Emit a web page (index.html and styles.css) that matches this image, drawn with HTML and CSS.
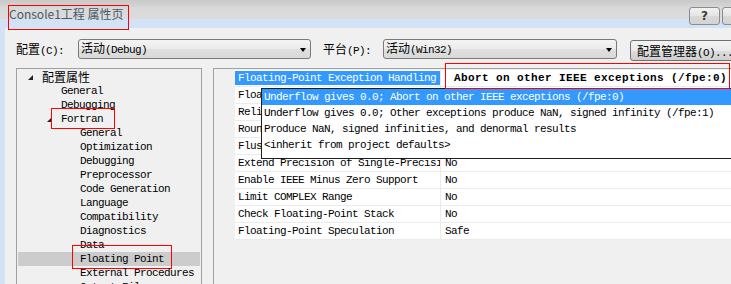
FILE: index.html
```html
<!DOCTYPE html>
<html>
<head>
<meta charset="utf-8">
<title>Console1工程 属性页</title>
<link rel="stylesheet" href="styles.css">
</head>
<body>
<div class="window">
  <div class="titlebar">
    <div class="title">Console1工程 属性页</div>
    <div class="tbtns"><div class="tbtn">?</div><div class="tbtn"></div></div>
    <span class="mark mark-title"></span>
  </div>
  <div class="main">
    <div class="edge"></div>
    <div class="dialog">
      <div class="toolbar ss">
        <div class="lbl lbl1"><span class="cj">配置</span>(C):</div>
        <div class="combo combo1"><span><span class="cj">活动</span>(Debug)</span><i class="arrow"></i></div>
        <div class="lbl lbl2"><span class="cj">平台</span>(P):</div>
        <div class="combo combo2"><span><span class="cj">活动</span>(Win32)</span><i class="arrow"></i></div>
        <div class="btn"><span class="cj">配置管理器</span>(O)...</div>
      </div>
      <div class="panes ss">
        <div class="tree">
          <div class="node l0"><i class="exp"><b class="tri"></b></i><span class="cj">配置属性</span></div>
          <div class="node l1"><i class="exp"></i>General</div>
          <div class="node l1"><i class="exp"></i>Debugging</div>
          <div class="node l1"><i class="exp"><b class="tri"></b></i>Fortran<span class="mark mark-fortran"></span></div>
          <div class="node l2"><i class="exp"></i>General</div>
          <div class="node l2"><i class="exp"></i>Optimization</div>
          <div class="node l2"><i class="exp"></i>Debugging</div>
          <div class="node l2"><i class="exp"></i>Preprocessor</div>
          <div class="node l2"><i class="exp"></i>Code Generation</div>
          <div class="node l2"><i class="exp"></i>Language</div>
          <div class="node l2"><i class="exp"></i>Compatibility</div>
          <div class="node l2"><i class="exp"></i>Diagnostics</div>
          <div class="node l2"><i class="exp"></i>Data</div>
          <div class="node l2 sel"><i class="exp"></i>Floating Point<span class="mark mark-fp"></span></div>
          <div class="node l2"><i class="exp"></i>External Procedures</div>
          <div class="node l2"><i class="exp"></i>Output Files</div>
        </div>
        <div class="grid">
          <div class="rows">
            <div class="row"><div class="name hl">Floating-Point Exception Handling</div><div class="val edit">Abort on other IEEE exceptions (/fpe:0)</div></div>
            <div class="row"><div class="name">Floating Point Model</div><div class="val">Precise (/fp:precise)</div></div>
            <div class="row"><div class="name">Reliable Floating Point Exceptions Model</div><div class="val">Disable</div></div>
            <div class="row"><div class="name">Round Floating Point Results</div><div class="val">Default</div></div>
            <div class="row"><div class="name">Flush Denormal Results to Zero</div><div class="val">No</div></div>
            <div class="row"><div class="name">Extend Precision of Single-Precision Constants</div><div class="val">No</div></div>
            <div class="row"><div class="name">Enable IEEE Minus Zero Support</div><div class="val">No</div></div>
            <div class="row"><div class="name">Limit COMPLEX Range</div><div class="val">No</div></div>
            <div class="row"><div class="name">Check Floating-Point Stack</div><div class="val">No</div></div>
            <div class="row"><div class="name">Floating-Point Speculation</div><div class="val">Safe</div></div>
          </div>
          <div class="popup">
            <div class="opt hl">Underflow gives 0.0; Abort on other IEEE exceptions (/fpe:0)</div>
            <div class="opt">Underflow gives 0.0; Other exceptions produce NaN, signed infinity (/fpe:1)</div>
            <div class="opt">Produce NaN, signed infinities, and denormal results</div>
            <div class="opt">&lt;inherit from project defaults&gt;</div>
          </div>
          <span class="mark mark-val"></span>
        </div>
      </div>
    </div>
  </div>
</div>
</body>
</html>
```

FILE: styles.css
```css
* { box-sizing: border-box; }
html, body {
  margin: 0;
  padding: 0;
  width: 731px;
  height: 284px;
  overflow: hidden;
  background: #d4e2f8;
}
.ss {
  font-family: "Liberation Mono", "Noto Sans CJK SC", monospace;
  font-size: 11px;
  letter-spacing: -0.6px;
  color: #000;
}
.cj {
  font-family: "Noto Sans CJK SC", sans-serif;
  font-size: 12px;
  letter-spacing: 0;
}
.window {
  display: flex;
  flex-direction: column;
  width: 731px;
}
.titlebar {
  position: relative;
  height: 28px;
  flex-shrink: 0;
  display: flex;
  align-items: flex-start;
  background: linear-gradient(#c9c9c9 0, #d1d1d1 5px, #d9d9d9 8px, #dbdbdb 19px, #d4e2f8 19px, #d4e2f8 28px);
}
.title {
  font-family: "Noto Sans CJK SC", sans-serif;
  font-size: 12px;
  color: #4a5868;
  padding-left: 9px;
  margin-top: 5px;
  line-height: 17px;
  white-space: nowrap;
}
.tbtns {
  display: flex;
  gap: 2px;
  margin-left: auto;
  margin-right: -22px;
  margin-top: 7px;
}
.tbtn {
  width: 31px;
  height: 18px;
  border: 1px solid #8c8c8c;
  border-radius: 3px;
  background: linear-gradient(#f2f2f2, #e4e4e4 50%, #d8d8d8 51%, #d4d4d4);
  font: bold 12px "DejaVu Sans", sans-serif;
  text-align: center;
  line-height: 16px;
  color: #3a3a3a;
}
.main {
  display: flex;
  height: 256px;
  flex-shrink: 0;
}
.edge {
  width: 5px;
  flex-shrink: 0;
  background: #d4e2f8;
}
.dialog {
  flex: 1;
  min-width: 0;
  background: #f0f0f0;
  display: flex;
  flex-direction: column;
  overflow: hidden;
}
.toolbar {
  display: flex;
  align-items: flex-start;
  flex-shrink: 0;
  height: 40px;
  padding: 11px 0 0 11px;
  white-space: nowrap;
}
.lbl {
  height: 20px;
  line-height: 20px;
  flex-shrink: 0;
}
.lbl1 { width: 62px; }
.lbl2 { width: 60px; margin-left: 12px; }
.combo {
  display: flex;
  align-items: center;
  justify-content: space-between;
  height: 20px;
  line-height: 18px;
  padding: 0 4px 0 2px;
  border: 1px solid #7a7a7a;
  border-radius: 3px;
  background: linear-gradient(#f4f4f4, #ebebeb 50%, #dfdfdf 51%, #d9d9d9);
  flex-shrink: 0;
}
.combo1 { width: 233px; }
.combo2 { width: 234px; }
.arrow {
  width: 0;
  height: 0;
  border-left: 3.5px solid transparent;
  border-right: 3.5px solid transparent;
  border-top: 4px solid #000;
  margin-top: 1px;
}
.btn {
  margin-left: 13px;
  margin-top: 1px;
  width: 120px;
  height: 21px;
  line-height: 19px;
  padding-left: 6px;
  flex-shrink: 0;
  border: 1px solid #707070;
  border-radius: 3px;
  background: linear-gradient(#f3f3f3, #ebebeb 50%, #dddddd 51%, #cfcfcf);
}
.panes {
  display: flex;
  flex-shrink: 0;
  gap: 11px;
  padding-left: 11px;
  height: 230px;
}
.tree {
  width: 186px;
  flex-shrink: 0;
  border: 1px solid #a0a0a0;
  background: #f0f0f0;
  padding-top: 1px;
}
.node {
  position: relative;
  display: flex;
  align-items: center;
  height: 14px;
  line-height: 14px;
  margin: 0 1px;
  white-space: nowrap;
}
.node.sel { background: #cccccc; }
.l0 { padding-left: 9px; }
.l1 { padding-left: 28px; }
.l2 { padding-left: 47px; }
.exp {
  display: flex;
  align-items: center;
  width: 15px;
  height: 14px;
  padding-left: 1px;
  flex-shrink: 0;
}
.tri {
  width: 0;
  height: 0;
  border-left: 5px solid transparent;
  border-bottom: 5px solid #222;
  margin-top: 1px;
}
.grid {
  flex: 1;
  min-width: 0;
  position: relative;
  border: 1px solid #a0a0a0;
  border-right: 0;
  background: #f0f0f0;
}
.rows {
  margin-left: 21px;
  padding-top: 1px;
}
.row {
  display: flex;
  height: 17px;
  line-height: 16px;
  background: #fff;
  border-bottom: 1px solid #ebebeb;
  white-space: nowrap;
}
.name {
  width: 206px;
  flex-shrink: 0;
  padding-left: 3px;
  overflow: hidden;
  border-right: 1px solid #ebebeb;
}
.name.hl {
  background: #3399ff;
  color: #fff;
  box-shadow: inset 0 1px 0 #fff, inset 0 -1px 0 #fff;
}
.val {
  flex: 1;
  padding-left: 4px;
  overflow: hidden;
}
.val.edit {
  padding-left: 13px;
  font-weight: bold;
  letter-spacing: 0.4px;
}
.popup {
  position: absolute;
  left: 47px;
  top: 19px;
  width: 480px;
  background: #fff;
  border: 1px solid #1e1e1e;
  padding-bottom: 5px;
}
.opt {
  height: 16px;
  line-height: 16px;
  padding-left: 2px;
  white-space: nowrap;
}
.opt.hl {
  background: #3399ff;
  color: #fff;
}
.mark {
  position: absolute;
  border: 1px solid #f00;
  pointer-events: none;
}
.mark-title { left: 8px; top: 5px; width: 121px; height: 25px; border-width: 1.5px; }
.mark-fortran { left: 33px; top: -4px; width: 64px; height: 21px; }
.mark-fp { left: 54px; top: -7px; width: 100px; height: 24px; }
.mark-val { left: 231px; top: -6px; width: 285px; height: 26px; }
```
